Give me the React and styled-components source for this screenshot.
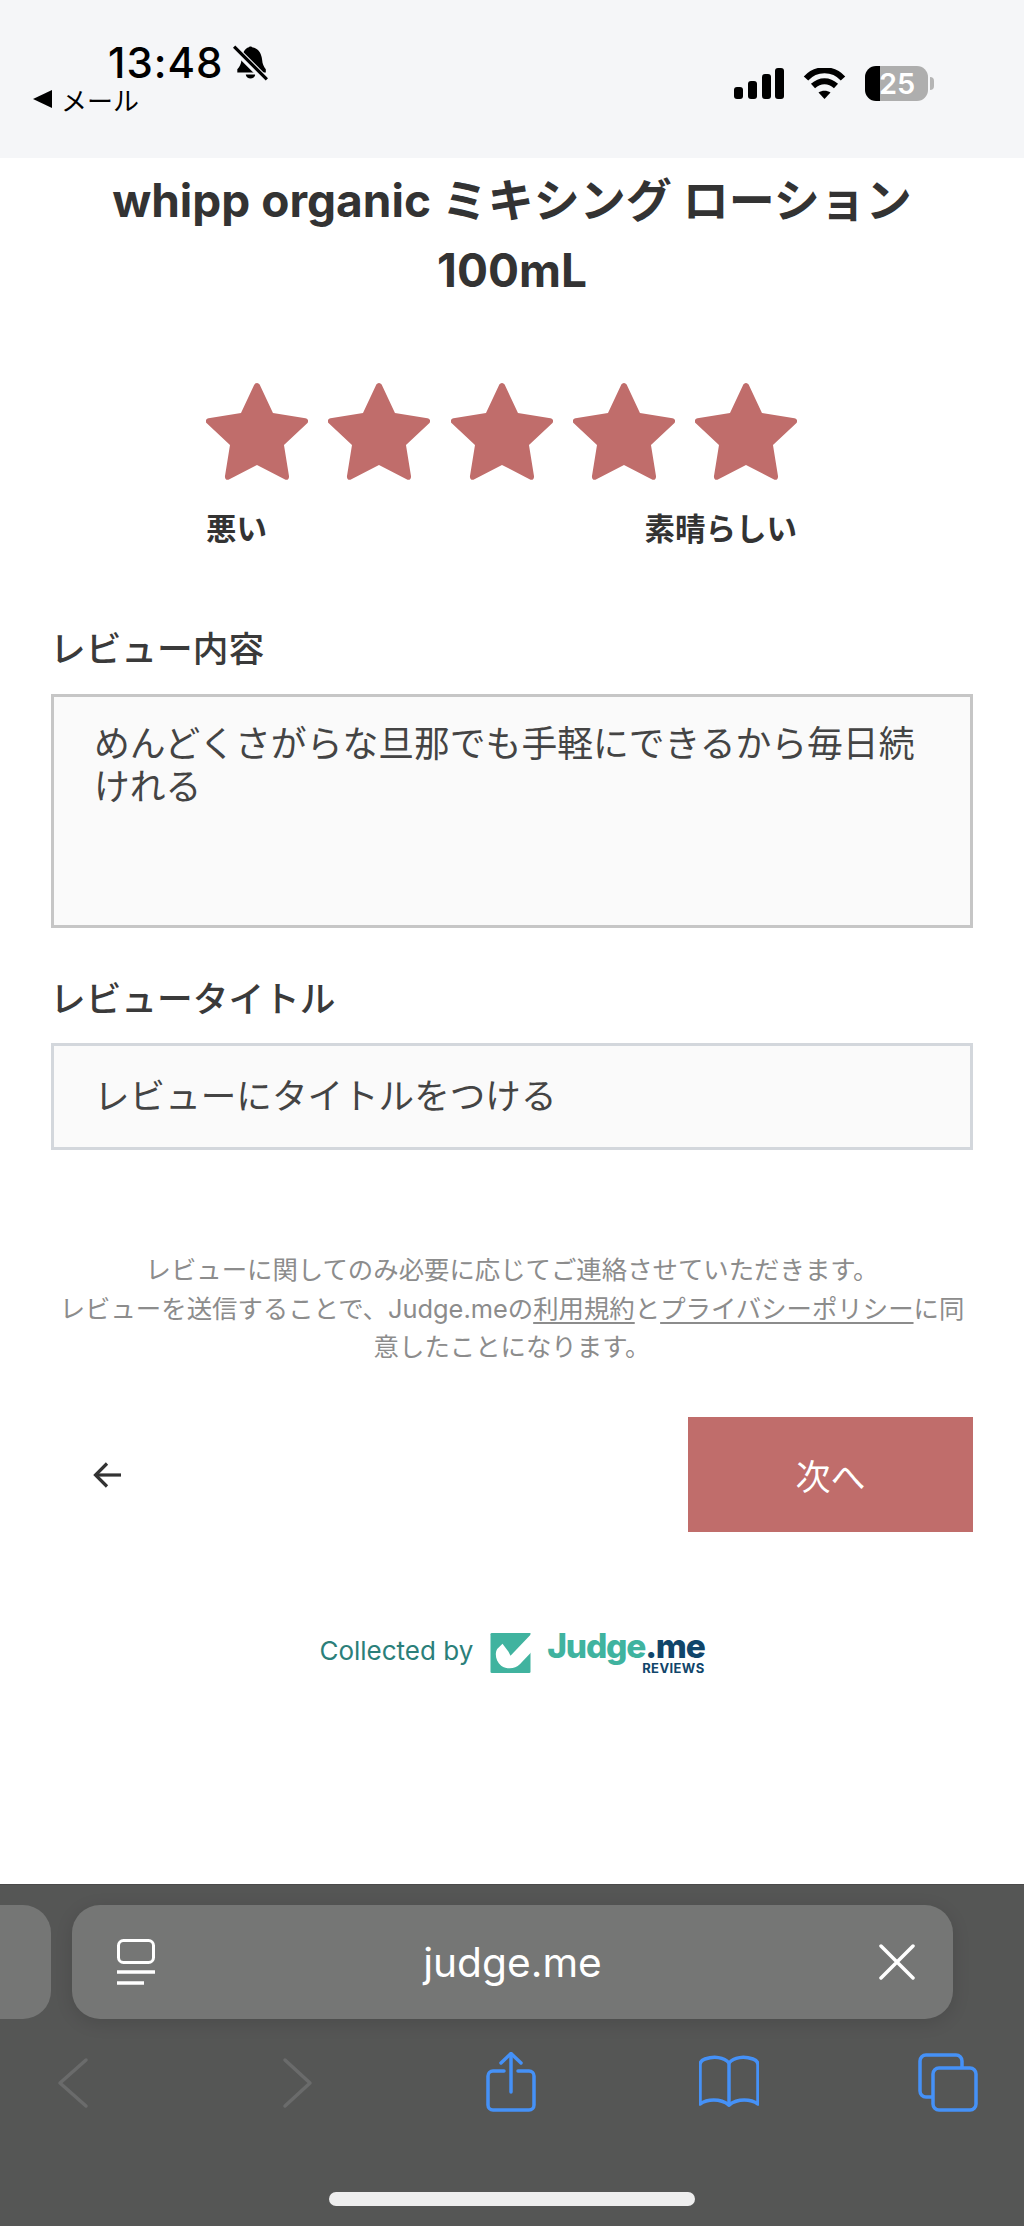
import React from "react";
import styled, { createGlobalStyle } from "styled-components";

const FONT = `Inter, "Noto Sans CJK JP", sans-serif`;
const ROSE = "#c06d6b";
const BLUE = "#4591f7";

const GlobalStyle = createGlobalStyle`
  html, body {
    margin: 0;
    padding: 0;
    background: #fff;
  }
  * {
    box-sizing: border-box;
  }
`;

const Page = styled.div`
  width: 1024px;
  height: 2226px;
  display: flex;
  flex-direction: column;
  overflow: hidden;
  font-family: ${FONT};
  color: #333;
  background: #fff;
`;

/* status bar */
const StatusBar = styled.header`
  height: 158px;
  flex: none;
  display: flex;
  justify-content: space-between;
  padding: 42px 96px 0 33px;
  background: #f5f6f8;
  color: #000;
`;

const StatusLeft = styled.div`
  display: flex;
  flex-direction: column;
`;

const TimeRow = styled.div`
  display: flex;
  align-items: center;
  gap: 8px;
  padding-left: 75px;
  height: 42px;
`;

const Time = styled.span`
  font-size: 42px;
  line-height: 42px;
  font-weight: 500;
  letter-spacing: 1px;
`;

const BackRow = styled.div`
  display: flex;
  align-items: center;
  gap: 8px;
  height: 34px;
  margin-top: -2px;
  font-size: 26px;
`;

const StatusRight = styled.div`
  display: flex;
  align-items: flex-start;
  gap: 19px;
  padding-top: 26px;
`;

const Battery = styled.div`
  position: relative;
  width: 63px;
  height: 35px;
  border-radius: 11px;
  background: linear-gradient(to right, #000 15px, #aeaeae 15px);
  margin-top: -2px;
  color: #fff;
  font-size: 29px;
  font-weight: 600;
  line-height: 35px;
  padding-left: 14px;
  &::after {
    content: "";
    position: absolute;
    right: -6px;
    top: 11px;
    width: 4px;
    height: 13px;
    border-radius: 0 4px 4px 0;
    background: #b5b5b5;
  }
`;

/* review form */
const Main = styled.main`
  flex: 1;
  display: flex;
  flex-direction: column;
  padding: 0 51px;
`;

const Title = styled.h1`
  margin: 7px 0 0;
  font-size: 46px;
  line-height: 70px;
  font-weight: 700;
  text-align: center;
`;

const Rating = styled.div`
  width: 591px;
  margin: 78px 0 0 155px;
`;

const Stars = styled.div`
  display: flex;
  gap: 20.3px;
  height: 97px;
`;

const RatingLabels = styled.div`
  display: flex;
  justify-content: space-between;
  margin-top: 29px;
  font-size: 30.5px;
  line-height: 40px;
  font-weight: 700;
`;

const FieldLabel = styled.label`
  display: block;
  margin: ${(p) => p.$top}px 0 0 -1px;
  font-size: 35.7px;
  line-height: 44px;
  font-weight: 500;
  color: #3a3a3a;
`;

const FieldBox = styled.div`
  margin-top: ${(p) => p.$top}px;
  height: ${(p) => p.$height}px;
  padding: ${(p) => p.$pad}px 38px 0 40px;
  border: 3px solid ${(p) => p.$border};
  background: #fafafa;
  font-size: ${(p) => p.$size}px;
  line-height: 43px;
  color: #444;
`;

const Notice = styled.p`
  margin: 101px 0 0;
  font-size: 25.4px;
  line-height: 38.5px;
  color: #8c8c8c;
  text-align: center;
`;

const NoticeLink = styled.a`
  color: inherit;
  text-decoration: underline;
  text-underline-offset: 4px;
`;

const Actions = styled.div`
  display: flex;
  align-items: center;
  justify-content: space-between;
  margin-top: 50px;
  padding-left: 42px;
`;

const NextButton = styled.button`
  width: 285px;
  height: 115px;
  border: 0;
  border-radius: 0;
  background: ${ROSE};
  color: #fff;
  font-family: ${FONT};
  font-size: 35px;
`;

const Credit = styled.footer`
  display: flex;
  align-items: center;
  justify-content: center;
  margin-top: 96px;
`;

const CreditText = styled.span`
  font-size: 26px;
  color: #2b7f7a;
  margin-right: 17px;
`;

const LogoSvg = styled.svg`
  width: 41px;
  height: 40px;
  margin-top: 4px;
`;

const Brand = styled.div`
  display: flex;
  flex-direction: column;
  align-items: flex-end;
  margin-left: 16px;
`;

const BrandName = styled.div`
  font-size: 33.5px;
  line-height: 36px;
  font-weight: 800;
  letter-spacing: -1.2px;
  color: #40b39f;
`;

const BrandDot = styled.span`
  color: #10456a;
`;

const BrandSub = styled.div`
  margin-top: -1px;
  font-size: 13px;
  line-height: 11px;
  font-weight: 700;
  letter-spacing: 0.4px;
  color: #10456a;
`;

/* safari chrome */
const BrowserBar = styled.footer`
  height: 342px;
  flex: none;
  display: flex;
  flex-direction: column;
  padding-top: 21px;
  background: #555655;
  border-top: 1px solid #4a4a4a;
`;

const TabRow = styled.div`
  display: flex;
  gap: 21px;
  height: 114px;
  flex: none;
  margin-top: -1px;
`;

const PrevTab = styled.div`
  width: 51px;
  border-radius: 0 28px 28px 0;
  background: #757675;
`;

const UrlPill = styled.div`
  width: 881px;
  display: grid;
  grid-template-columns: 1fr auto 1fr;
  align-items: center;
  padding: 0 38px;
  border-radius: 28px;
  background: #757675;
  box-shadow: 0 4px 18px rgba(0, 0, 0, 0.12);
  color: #fff;
  font-size: 40.7px;
`;

const TabSlot = styled.div`
  display: flex;
  padding-left: 7px;
`;

const CloseSlot = styled.div`
  display: flex;
  justify-content: flex-end;
`;

const Toolbar = styled.nav`
  display: flex;
  justify-content: space-between;
  height: 60px;
  flex: none;
  margin-top: 33px;
  padding: 0 46px 0 43px;
`;

const ToolIcon = styled.svg`
  width: 60px;
  height: 60px;
  display: block;
`;

const HomeIndicator = styled.div`
  width: 366px;
  height: 14px;
  flex: none;
  margin: 80px auto 0;
  border-radius: 7px;
  background: #eee;
`;

const Star = () => (
  <svg width="102" height="97" viewBox="0 0 102 97">
    <path
      fill={ROSE}
      d="M51 0c1.4 0 2.400.9 3 2.300L67 30l32.500 5.300c2.500.4 3.500 2.800 2 4.700L78 62l5 31c.4 3-1.800 4.800-4.400 3.200L51 82 23.400 96.200c-2.600 1.600-4.800-.2-4.400-3.200l5-31L.5 40c-1.500-1.900-.5-4.300 2-4.700L35 30 48 2.300C48.600.9 49.600 0 51 0z"
    />
  </svg>
);

const BellSlash = () => (
  <svg width="37" height="38" viewBox="0 0 35 36">
    <path d="M19 3c6 1 9 6 9.500 12 .3 4 1.500 6.500 3.500 9v3H5v-3c2.500-2.500 3.500-5 4-9 .6-6 3-11 7-12 0-1 3-1 3 0z" />
    <path d="M13 29h9c-.5 5-8.500 5-9 0z" />
    <path d="M2 4l30 30" stroke="#f5f6f8" strokeWidth="7" />
    <path d="M2 2.500l31 31" stroke="#000" strokeWidth="3" />
  </svg>
);

const Signal = () => (
  <svg width="50" height="31" viewBox="0 0 50 31">
    <rect x="0" y="19" width="9" height="12" rx="3" />
    <rect x="14" y="13" width="9" height="18" rx="3" />
    <rect x="28" y="6" width="9" height="25" rx="3" />
    <rect x="41" y="0" width="9" height="31" rx="3" />
  </svg>
);

const Wifi = () => (
  <svg width="43" height="31" viewBox="0 0 43 31" fill="none" stroke="#000" strokeWidth="6">
    <path d="M3 10.500C13-.5 30-.5 40 10.500" />
    <path d="M10 18c7-6.500 16-6.500 23 0" />
    <path d="M15.500 24.500c3.500-2.500 8.500-2.500 12 0L21.500 31z" fill="#000" stroke="none" />
  </svg>
);

const LeftTriangle = () => (
  <svg width="20" height="18" viewBox="0 0 20 18">
    <path d="M0 9l19-9v18z" />
  </svg>
);

const BackArrow = () => (
  <svg width="28" height="28" viewBox="0 -2 28 28" fill="none" stroke="#333" strokeWidth="3.200">
    <path d="M28 13H3" />
    <path d="M14 1.500L2.500 13 14 24.500" />
  </svg>
);

const LogoMark = () => (
  <LogoSvg viewBox="0 0 120 120">
    <path fill="#40b39f" d="M0 4a4 4 0 014-4h116v116a4 4 0 01-4 4H4a4 4 0 01-4-4z" />
    <path
      fill="#fff"
      d="M122 3L60 68 54 56 36 32 20 48c-8 14-4 38 12 50 18 12 42 10 56-4l34-36z"
    />
  </LogoSvg>
);

const TabOverview = () => (
  <svg width="38" height="46" viewBox="0 0 38 46" fill="none" stroke="#fff">
    <rect x="1.500" y="1.500" width="35" height="22" rx="5" strokeWidth="3" />
    <path d="M0 33h38" strokeWidth="3.500" />
    <path d="M0 44h27" strokeWidth="3.500" />
  </svg>
);

const CloseIcon = () => (
  <svg width="36" height="36" viewBox="0 0 36 36" fill="none" stroke="#fff" strokeWidth="3.500" strokeLinecap="round">
    <path d="M2 2l32 32M34 2L2 34" />
  </svg>
);

const Chevron = ({ d }) => (
  <ToolIcon viewBox="0 0 60 60" fill="none" stroke="#6a6b6b" strokeWidth="3.500" strokeLinecap="round" strokeLinejoin="round">
    <path d={d} />
  </ToolIcon>
);

const ShareIcon = () => (
  <ToolIcon viewBox="0 0 60 60" fill="none" stroke={BLUE} strokeWidth="3.500" strokeLinecap="round" strokeLinejoin="round">
    <path d="M23 19h-11a5 5 0 00-5 5v29a5 5 0 005 5h36a5 5 0 005-5V24a5 5 0 00-5-5H37" />
    <path d="M30 40V2" />
    <path d="M20 11L30 1.500 40 11" />
  </ToolIcon>
);

const BookIcon = () => (
  <ToolIcon viewBox="0 0 60 60" fill="none" stroke={BLUE} strokeWidth="3.500" strokeLinecap="round" strokeLinejoin="round">
    <path d="M30 11C25 5 15 4 6 7c-3 1-5 3-5 6v39c7-5 20-6 29 1 9-7 22-6 29-1V13c0-3-2-5-5-6-9-3-19-2-24 4z" />
    <path d="M30 11v42" />
  </ToolIcon>
);

const TabsIcon = () => (
  <ToolIcon viewBox="0 0 60 60" fill="none" stroke={BLUE} strokeWidth="3.500" strokeLinejoin="round">
    <path d="M14 45H8a6 6 0 01-6-6V9a6 6 0 016-6h30a6 6 0 016 6v7" />
    <rect x="15" y="16" width="43" height="42" rx="6" />
  </ToolIcon>
);

const App = () => (
  <Page>
    <GlobalStyle />
    <StatusBar>
      <StatusLeft>
        <TimeRow>
          <Time>13:48</Time>
          <BellSlash />
        </TimeRow>
        <BackRow>
          <LeftTriangle />
          メール
        </BackRow>
      </StatusLeft>
      <StatusRight>
        <Signal />
        <Wifi />
        <Battery>25</Battery>
      </StatusRight>
    </StatusBar>

    <Main>
      <Title>
        whipp organic ミキシング ローション
        <br />
        100mL
      </Title>
      <Rating>
        <Stars>
          {[1, 2, 3, 4, 5].map((n) => (
            <Star key={n} />
          ))}
        </Stars>
        <RatingLabels>
          <span>悪い</span>
          <span>素晴らしい</span>
        </RatingLabels>
      </Rating>

      <FieldLabel $top={78}>レビュー内容</FieldLabel>
      <FieldBox $top={23} $height={234} $pad={26} $size={35.8} $border="#c6c6c6">
        めんどくさがらな旦那でも手軽にできるから毎日続けれる
      </FieldBox>

      <FieldLabel $top={49}>レビュータイトル</FieldLabel>
      <FieldBox $top={22} $height={107} $pad={29} $size={35.6} $border="#d3d7dc">
        レビューにタイトルをつける
      </FieldBox>

      <Notice>
        レビューに関してのみ必要に応じてご連絡させていただきます。
        <br />
        レビューを送信することで、Judge.meの<NoticeLink>利用規約</NoticeLink>と
        <NoticeLink>プライバシーポリシー</NoticeLink>に同意したことになります。
      </Notice>

      <Actions>
        <BackArrow />
        <NextButton>次へ</NextButton>
      </Actions>

      <Credit>
        <CreditText>Collected by</CreditText>
        <LogoMark />
        <Brand>
          <BrandName>
            Judge<BrandDot>.me</BrandDot>
          </BrandName>
          <BrandSub>REVIEWS</BrandSub>
        </Brand>
      </Credit>
    </Main>

    <BrowserBar>
      <TabRow>
        <PrevTab />
        <UrlPill>
          <TabSlot>
            <TabOverview />
          </TabSlot>
          <span>judge.me</span>
          <CloseSlot>
            <CloseIcon />
          </CloseSlot>
        </UrlPill>
      </TabRow>
      <Toolbar>
        <Chevron d="M43 8L17 31l26 23" />
        <Chevron d="M23 8l25 23-25 23" />
        <ShareIcon />
        <BookIcon />
        <TabsIcon />
      </Toolbar>
      <HomeIndicator />
    </BrowserBar>
  </Page>
);

export default App;
